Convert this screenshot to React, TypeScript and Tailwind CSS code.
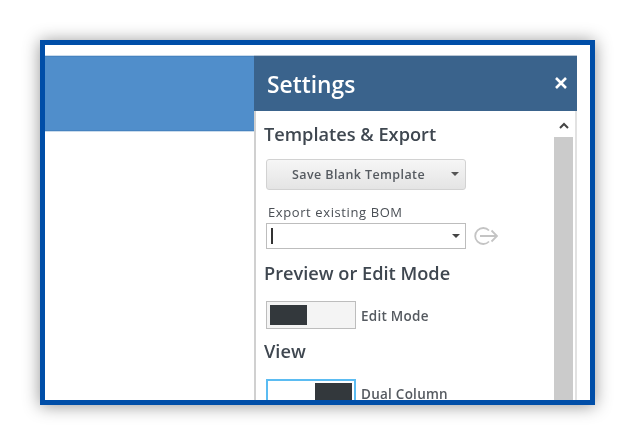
export default function App() {
  return (
    <div className="h-[445px] w-[635px] overflow-hidden bg-white pt-10 pl-10 font-['Open_Sans','Noto_Sans',sans-serif]">
      <div className="flex h-[365px] w-[555px] items-start overflow-hidden border-[5px] border-[#004ea8] bg-white pt-[11px] pr-[13px] shadow-[0_1px_16px_rgba(0,0,0,0.42)]">
        <div className="h-[75px] w-[209px] shrink-0 border-y border-[#4683c0] bg-[#508ecb] shadow-[0_1px_0_#c9dbec,0_-1px_0_#c9dbec]" />
        <div className="flex h-[344px] w-[323px] shrink-0 flex-col">
          <div className="flex h-[55px] shrink-0 items-start justify-between bg-[#3a638c] pt-[11px] pr-[9px] pl-[13px] text-white shadow-[0_-1px_0_#b9c6d4,0_1px_0_#9aa9b8]">
            <span className="text-[22.8px] leading-[36px] font-semibold blur-[0.3px]">Settings</span>
            <svg className="mt-[9px] blur-[0.3px]" width="14" height="14" viewBox="0 0 14 14" fill="none">
              <path d="M2 2L12 12M12 2L2 12" stroke="#ffffff" strokeWidth="2.6" />
            </svg>
          </div>
          <div className="flex min-h-0 flex-1 border-x-2 border-[#d0d0d0] border-r-[#e2e2e2] bg-white">
            <div className="min-w-0 flex-1 pt-[10px] pl-[8px] text-[#3f4750] blur-[0.3px]">
              <h2 className="text-[18.2px] leading-[26px] font-semibold">Templates &amp; Export</h2>
              <button className="mt-[12px] ml-[2px] flex h-[31px] w-[200px] items-center rounded-[3px] border border-[#d2d2d2] bg-gradient-to-b from-[#f6f6f6] to-[#e4e4e4] pr-[6px] pl-[25px] text-[12.5px] font-semibold tracking-[0.4px] text-[#555a60]">
                <span className="mt-[2px] flex-1 text-left">Save Blank Template</span>
                <span className="mb-[2px] h-0 w-0 border-x-[4px] border-t-[4px] border-x-transparent border-t-[#555555]" />
              </button>
              <div className="mt-[13px] ml-[4px] text-[13px] leading-[18px] font-medium tracking-[0.6px] text-[#4a4f55]">Export existing BOM</div>
              <div className="mt-[2px] ml-[2px] flex items-center gap-[8px]">
                <div className="flex h-[26px] w-[200px] items-center justify-between border border-[#bdbdbd] bg-white pr-[5px] pl-[4px]">
                  <span className="h-[16px] w-[2px] bg-[#333333]" />
                  <span className="h-0 w-0 border-x-[4px] border-t-[4px] border-x-transparent border-t-[#444444]" />
                </div>
                <svg width="24" height="20" viewBox="0 0 24 20" fill="none" stroke="#c4c4c4" strokeWidth="1.8">
                  <path d="M15 4.5A8 8 0 1 0 15 15.5" />
                  <path d="M6 10H23M17.5 4.5L23 10L17.5 15.5" />
                </svg>
              </div>
              <h2 className="mt-[11px] text-[18.2px] leading-[26px] font-semibold">Preview or Edit Mode</h2>
              <div className="mt-[15px] ml-[2px] flex items-center gap-[5px]">
                <div className="h-[28px] w-[90px] border border-[#bdbdbd] bg-[#f4f4f4] p-[3px]">
                  <div className="h-full w-[37px] bg-[#33383c]" />
                </div>
                <span className="mt-[2px] text-[13.5px] font-semibold tracking-[0.25px] text-[#555a60]">Edit Mode</span>
              </div>
              <h2 className="mt-[9px] text-[18.2px] leading-[26px] font-semibold">View</h2>
              <div className="mt-[15px] ml-[2px] flex items-start gap-[5px]">
                <div className="flex h-[28px] w-[90px] justify-end border-2 border-[#5bbcf2] bg-white p-[2px]">
                  <div className="h-full w-[37px] bg-[#33383c]" />
                </div>
                <span className="mt-[5px] text-[13.5px] font-semibold tracking-[0.25px] text-[#555a60]">Dual Column</span>
              </div>
            </div>
            <div className="mt-[3px] mr-[2px] flex w-[19px] shrink-0 flex-col">
              <div className="flex h-[23px] items-center justify-center">
                <svg width="10" height="7" viewBox="0 0 10 7" fill="none">
                  <path d="M1 6L5 2L9 6" stroke="#444444" strokeWidth="2" />
                </svg>
              </div>
              <div className="flex-1 bg-[#cbcbcb]" />
            </div>
          </div>
        </div>
      </div>
    </div>
  );
}
